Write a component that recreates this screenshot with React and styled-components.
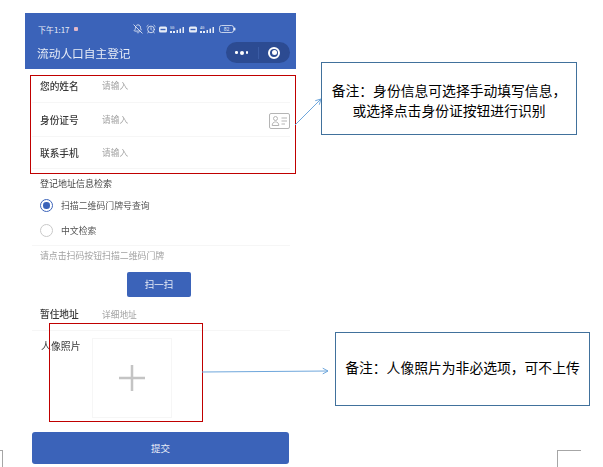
import React from "react";
import styled, { createGlobalStyle } from "styled-components";
import { AlarmClock, BellOff } from "lucide-react";

const Global = createGlobalStyle`
  html, body { margin: 0; padding: 0; background: #fff; }
  body { font-family: "Noto Sans CJK SC", "Noto Sans", sans-serif; }
`;

const Page = styled.div`
  position: relative;
  width: 603px;
  height: 467px;
  overflow: hidden;
  padding: 13px 0 0 25px;
  box-sizing: border-box;
`;

const Phone = styled.div`
  width: 271px;
  display: flex;
  flex-direction: column;
  filter: blur(0.45px);
`;

const Header = styled.header`
  height: 56px;
  background: #3b63b9;
  color: #e8edf7;
  display: flex;
  flex-direction: column;
  box-sizing: border-box;
  padding: 10px 6px 0 12px;
`;

const StatusBar = styled.div`
  height: 12px;
  display: flex;
  align-items: center;
  font-size: 8px;
  padding-left: 1px;
`;

const StatusIcons = styled.div`
  display: flex;
  align-items: center;
  gap: 3px;
  margin-left: 55px;
  color: #e8edf7;
`;

const Notice = styled.span`
  width: 4px;
  height: 4px;
  margin-left: 4px;
  background: #e3b7c8;
  border-radius: 1px;
`;

const TitleRow = styled.div`
  display: flex;
  align-items: center;
  justify-content: space-between;
  margin-top: 7px;
  height: 21px;
`;

const Title = styled.div`
  font-size: 11.7px;
`;

const Capsule = styled.div`
  width: 64px;
  height: 21px;
  border-radius: 11px;
  background: #2c4b92;
  display: flex;
  align-items: center;
`;

const CapsulePart = styled.div`
  flex: 1;
  height: 100%;
  display: flex;
  align-items: center;
  justify-content: center;
  gap: 2px;
  & + & { border-left: 1px solid #3a5ba4; height: 12px; }
`;

const Dot = styled.i`
  display: block;
  width: ${(p) => (p.$big ? 4 : 2.5)}px;
  height: ${(p) => (p.$big ? 4 : 2.5)}px;
  border-radius: 50%;
  background: #fff;
`;

const Target = styled.div`
  width: 8px;
  height: 8px;
  border: 2.5px solid #fff;
  border-radius: 50%;
  position: relative;
  &::after {
    content: "";
    position: absolute;
    inset: 1.5px;
    border-radius: 50%;
    background: #fff;
  }
`;

const Row = styled.div`
  height: ${(p) => p.$h || 33}px;
  margin: 0 6px 0 7px;
  padding-left: 8px;
  display: flex;
  align-items: center;
  justify-content: space-between;
  border-bottom: 1px solid #f6f6f6;
  box-sizing: border-box;
`;

const Field = styled.div`
  display: flex;
  align-items: center;
`;

const Label = styled.span`
  width: 62px;
  font-size: 9.7px;
  font-weight: 500;
  color: #383838;
`;

const Placeholder = styled.span`
  font-size: 8.7px;
  color: #a2a2a2;
`;

const CardButton = styled.div`
  width: 21px;
  height: 16px;
  margin-top: 3px;
  border: 1px solid #b5b5b5;
  border-radius: 2px;
  box-sizing: border-box;
  display: flex;
  align-items: center;
  justify-content: center;
`;

const SectionTitle = styled.div`
  height: 24px;
  padding: 6px 0 0 15px;
  box-sizing: border-box;
  font-size: 9px;
  line-height: 18px;
  color: #444;
`;

const RadioGroup = styled.div`
  margin: 0 6px 0 7px;
  padding: 0 0 2px 8px;
  border-bottom: 1px solid #f6f6f6;
`;

const RadioRow = styled.div`
  height: 25px;
  display: flex;
  align-items: center;
  gap: 8px;
  font-size: 8.9px;
  color: #555;
`;

const Radio = styled.span`
  width: 13px;
  height: 13px;
  border-radius: 50%;
  box-sizing: border-box;
  border: ${(p) => (p.$on ? "1.5px solid #3b63b9" : "1px solid #c8c8c8")};
  display: flex;
  align-items: center;
  justify-content: center;
  &::after {
    content: "";
    display: ${(p) => (p.$on ? "block" : "none")};
    width: 6.5px;
    height: 6.5px;
    border-radius: 50%;
    background: #3b63b9;
  }
`;

const Hint = styled.div`
  height: 20px;
  line-height: 20px;
  padding-left: 15px;
  font-size: 8.9px;
  color: #a2a2a2;
`;

const ScanButton = styled.div`
  align-self: flex-start;
  margin: 6px 0 1px 102px;
  width: 64px;
  height: 25px;
  background: #3b63b9;
  border-radius: 2px;
  color: #e8edf7;
  font-size: 9.5px;
  line-height: 25px;
  text-align: center;
`;

const PhotoRow = styled.div`
  display: flex;
  height: 87px;
  padding: 7px 0 0 15px;
  box-sizing: border-box;
`;

const PhotoLabel = styled(Label)`
  width: 52px;
  padding-left: 1px;
  box-sizing: border-box;
  line-height: 16px;
  font-size: 9.9px;
  font-weight: 400;
`;

const Upload = styled.div`
  width: 80px;
  height: 80px;
  box-sizing: border-box;
  border: 1px solid #f6f6f6;
  display: flex;
  align-items: center;
  justify-content: center;
`;

const SubmitButton = styled.div`
  margin: 14px 0 0 7px;
  width: 257px;
  height: 32px;
  background: #3b63b9;
  border-radius: 3px;
  color: #e8edf7;
  font-size: 9.5px;
  line-height: 32px;
  text-align: center;
`;

const RedFrame = styled.div`
  position: absolute;
  left: ${(p) => p.$x}px;
  top: ${(p) => p.$y}px;
  width: ${(p) => p.$w}px;
  height: ${(p) => p.$h}px;
  border: 1px solid #c00000;
  box-sizing: border-box;
`;

const Callout = styled.div`
  position: absolute;
  left: ${(p) => p.$x}px;
  top: ${(p) => p.$y}px;
  width: ${(p) => p.$w}px;
  height: ${(p) => p.$h}px;
  padding: ${(p) => p.$pad};
  border: 1px solid #41719c;
  box-sizing: border-box;
  display: flex;
  align-items: center;
  justify-content: center;
  text-align: center;
  background: #fff;
  font-size: 13.8px;
  line-height: 20px;
  color: #000;
`;

const Mark = styled.div`
  position: absolute;
  top: 450px;
  left: ${(p) => p.$x}px;
  width: ${(p) => p.$w}px;
  height: 17px;
  border-top: 1px solid #a6a6a6;
  ${(p) => (p.$side === "left" ? "border-left" : "border-right")}: 1px solid #a6a6a6;
  box-sizing: border-box;
`;

const Overlay = styled.svg`
  position: absolute;
  left: 0;
  top: 0;
  pointer-events: none;
`;

function Signal({ label }) {
  return (
    <svg width="16" height="9" viewBox="0 0 16 9" fill="currentColor">
      <text x="0" y="3.5" fontSize="3.5" fontFamily="Roboto, sans-serif">{label}</text>
      <rect x="0" y="6" width="2" height="2" />
      <rect x="3" y="6" width="2" height="2" />
      <rect x="6.5" y="5" width="1.5" height="3" />
      <rect x="9.5" y="3.6" width="1.5" height="4.4" />
      <rect x="12.5" y="2" width="1.5" height="6" />
    </svg>
  );
}

function SimTag() {
  return (
    <svg width="8" height="7" viewBox="0 0 8 7">
      <rect x="0" y="0.5" width="8" height="6" rx="1.5" fill="currentColor" />
      <rect x="1.5" y="2.8" width="5" height="1.4" fill="#3b63b9" />
    </svg>
  );
}

function Battery() {
  return (
    <svg width="17" height="8" viewBox="0 0 17 8">
      <rect x="0.5" y="0.5" width="14" height="7" rx="2" fill="none" stroke="currentColor" strokeWidth="0.8" />
      <rect x="15" y="2.5" width="1.4" height="3" rx="0.5" fill="currentColor" />
      <text x="7.5" y="6" fontSize="5" textAnchor="middle" fill="currentColor" fontFamily="Roboto, sans-serif">82</text>
    </svg>
  );
}

function IdCardIcon() {
  return (
    <svg width="17" height="12" viewBox="0 0 17 12" fill="none" stroke="#adadad" strokeWidth="0.9">
      <circle cx="4.5" cy="3.5" r="2" />
      <path d="M1.2 10.5c0-2.4 1.4-3.6 3.3-3.6s3.3 1.2 3.3 3.6z" />
      <path d="M10.5 3h5.5M10.5 6h5.5M10.5 9h3.5" />
    </svg>
  );
}

function Arrow({ x1, y1, x2, y2 }) {
  const a = Math.atan2(y2 - y1, x2 - x1);
  const head = (d) =>
    `${x2 - 6 * Math.cos(a + d)},${y2 - 6 * Math.sin(a + d)}`;
  return (
    <g fill="none" stroke="#6ea6db" strokeWidth="1">
      <path d={`M${x1} ${y1}L${x2} ${y2}`} />
      <path d={`M${head(0.5)}L${x2},${y2}L${head(-0.5)}`} />
    </g>
  );
}

export default function App() {
  return (
    <Page>
      <Global />
      <Phone>
        <Header>
          <StatusBar>
            下午1:17
            <Notice />
            <StatusIcons>
              <BellOff size={10} strokeWidth={2} />
              <AlarmClock size={10} strokeWidth={2} />
              <SimTag />
              <Signal label="5G" />
              <SimTag />
              <Signal label="4G" />
              <Battery />
            </StatusIcons>
          </StatusBar>
          <TitleRow>
            <Title>流动人口自主登记</Title>
            <Capsule>
              <CapsulePart>
                <Dot />
                <Dot $big />
                <Dot />
              </CapsulePart>
              <CapsulePart>
                <Target />
              </CapsulePart>
            </Capsule>
          </TitleRow>
        </Header>
        <Row $h={34}>
          <Field>
            <Label>您的姓名</Label>
            <Placeholder>请输入</Placeholder>
          </Field>
        </Row>
        <Row $h={34}>
          <Field>
            <Label>身份证号</Label>
            <Placeholder>请输入</Placeholder>
          </Field>
          <CardButton>
            <IdCardIcon />
          </CardButton>
        </Row>
        <Row $h={32}>
          <Field>
            <Label>联系手机</Label>
            <Placeholder>请输入</Placeholder>
          </Field>
        </Row>
        <SectionTitle>登记地址信息检索</SectionTitle>
        <RadioGroup>
          <RadioRow>
            <Radio $on />
            扫描二维码门牌号查询
          </RadioRow>
          <RadioRow>
            <Radio />
            中文检索
          </RadioRow>
        </RadioGroup>
        <Hint>请点击扫码按钮扫描二维码门牌</Hint>
        <ScanButton>扫一扫</ScanButton>
        <Row>
          <Field>
            <Label>暂住地址</Label>
            <Placeholder>详细地址</Placeholder>
          </Field>
        </Row>
        <PhotoRow>
          <PhotoLabel>人像照片</PhotoLabel>
          <Upload>
            <svg width="28" height="28" viewBox="0 0 28 28" fill="#c4c4c4">
              <rect x="12.75" y="1" width="2.5" height="26" />
              <rect x="1" y="12.75" width="26" height="2.5" />
            </svg>
          </Upload>
        </PhotoRow>
        <SubmitButton>提交</SubmitButton>
      </Phone>

      <RedFrame $x={30} $y={75} $w={266} $h={99} />
      <RedFrame $x={49} $y={323} $w={154} $h={99} />

      <Overlay width="603" height="467">
        <Arrow x1={295} y1={125} x2={321} y2={99} />
        <Arrow x1={202} y1={372} x2={328} y2={371} />
      </Overlay>

      <Callout $x={321} $y={62} $w={256} $h={73} $pad="3px 0 0">
        <div>
          备注：身份信息可选择手动填写信息，
          <br />
          或选择点击身份证按钮进行识别
        </div>
      </Callout>
      <Callout $x={335} $y={332} $w={255} $h={74} $pad="0 0 4px">
        备注：人像照片为非必选项，可不上传
      </Callout>

      <Mark $x={-1} $w={4} $side="right" />
      <Mark $x={557} $w={24} $side="left" />
    </Page>
  );
}
